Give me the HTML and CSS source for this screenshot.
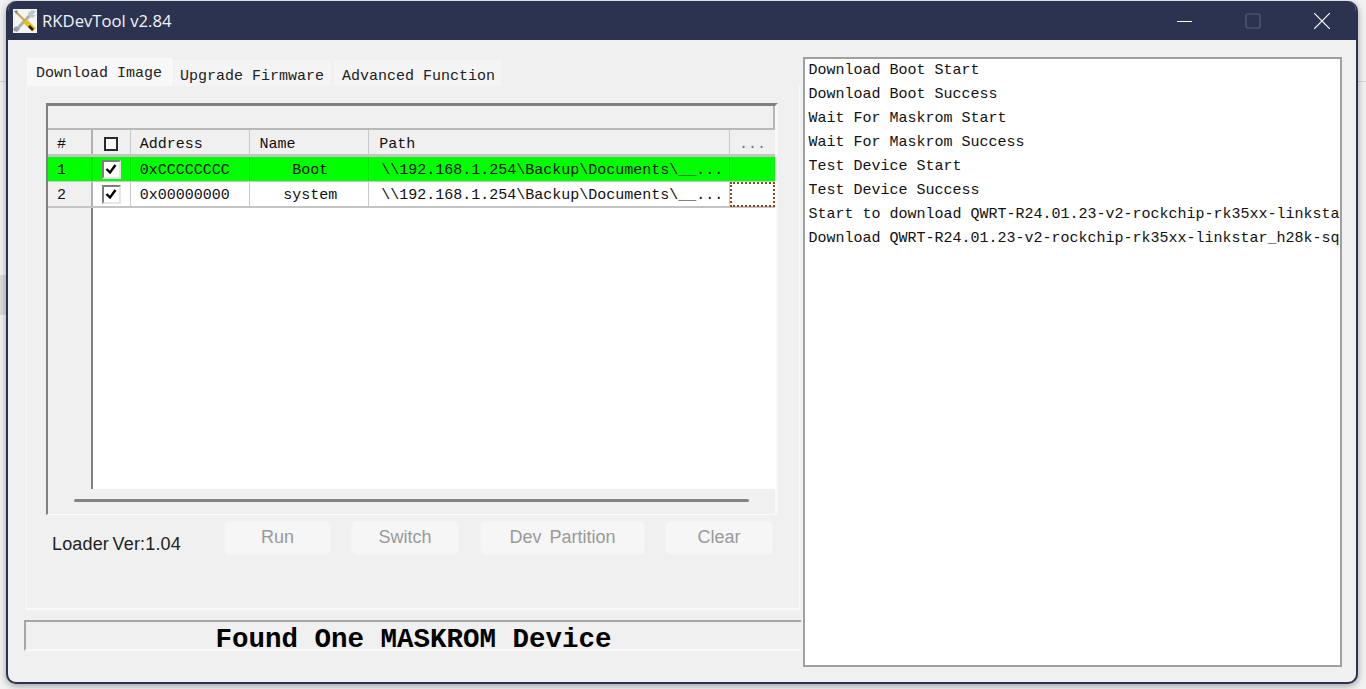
FILE: index.html
```html
<!DOCTYPE html>
<html lang="en">
<head>
<meta charset="utf-8">
<title>RKDevTool v2.84</title>
<link rel="stylesheet" href="styles.css">
</head>
<body>
<div class="desktop">
  <span class="bg-line bg-line-left"></span>
  <span class="bg-line bg-line-right"></span>
  <span class="bg-block"></span>
  <div class="window">
    <header class="titlebar">
      <svg class="app-icon" width="24" height="24" viewBox="0 0 24 24">
        <rect width="24" height="24" fill="#f4f4f4"/>
        <path d="M20 3 5 19" stroke="#a9b0b3" stroke-width="3"/>
        <path d="M19 1l4 1-3 4 3 0-3 3-4-1-1-4z" fill="#c3c8ca"/>
        <path d="M3 17l4 3-3 3-3-1-1-2z" fill="#9aa1a4"/>
        <path d="M3 3 13 13" stroke="#c9a24a" stroke-width="2"/>
        <path d="M1 2l3-1 1 3-2 1z" fill="#8a8f91"/>
        <path d="M12 12 21 21" stroke="#e3c21a" stroke-width="5"/>
        <path d="M16 17 20 21" stroke="#1d1d10" stroke-width="2.5"/>
      </svg>
      <span class="app-title">RKDevTool v2.84</span>
      <div class="win-controls">
        <svg class="win-btn" width="16" height="16" viewBox="0 0 16 16"><path d="M1 8.5h15" stroke="#fff" stroke-width="1.2"/></svg>
        <svg class="win-btn" width="16" height="16" viewBox="0 0 16 16"><rect x="1" y="1" width="14" height="14" rx="2" fill="none" stroke="#565f7d" stroke-width="1.2"/></svg>
        <svg class="win-btn" width="16" height="16" viewBox="0 0 16 16"><path d="M0 0 16 16M16 0 0 16" stroke="#fff" stroke-width="1.2"/></svg>
      </div>
    </header>
    <div class="client">
      <div class="left-col">
        <nav class="tabs">
          <span class="tab tab-active">Download Image</span>
          <span class="tab tab-upgrade">Upgrade Firmware</span>
          <span class="tab tab-advanced">Advanced Function</span>
        </nav>
        <section class="tab-panel">
          <div class="grid-box">
            <div class="grid-top"></div>
            <div class="row row-head">
              <div class="cell c-num">#</div>
              <div class="cell c-check"><span class="box-head"></span></div>
              <div class="cell c-addr">Address</div>
              <div class="cell c-name name-head">Name</div>
              <div class="cell c-path">Path</div>
              <div class="cell c-more">...</div>
            </div>
            <div class="row row-green">
              <div class="cell c-num">1</div>
              <div class="cell c-check"><span class="box"><svg width="14" height="14" viewBox="0 0 14 14"><path d="M2.5 7 6 10.5 11.5 3" fill="none" stroke="#000" stroke-width="2.4"/></svg></span></div>
              <div class="cell c-addr">0xCCCCCCCC</div>
              <div class="cell c-name">Boot</div>
              <div class="cell c-path">\\192.168.1.254\Backup\Documents\__...</div>
              <div class="cell c-more"></div>
            </div>
            <div class="row row-white">
              <div class="cell c-num">2</div>
              <div class="cell c-check"><span class="box"><svg width="14" height="14" viewBox="0 0 14 14"><path d="M2.5 7 6 10.5 11.5 3" fill="none" stroke="#000" stroke-width="2.4"/></svg></span></div>
              <div class="cell c-addr">0x00000000</div>
              <div class="cell c-name">system</div>
              <div class="cell c-path">\\192.168.1.254\Backup\Documents\__...</div>
              <div class="cell c-more c-focus"></div>
            </div>
            <div class="grid-fill"><div class="fill-head"></div><div class="fill-body"></div></div>
            <div class="hscroll"><span class="hscroll-line"></span></div>
          </div>
          <div class="actions">
            <span class="loader">Loader Ver:1.04</span>
            <button class="btn btn-run">Run</button>
            <button class="btn btn-switch">Switch</button>
            <button class="btn btn-dev">Dev Partition</button>
            <button class="btn btn-clear">Clear</button>
          </div>
        </section>
        <div class="status">Found One MASKROM Device</div>
      </div>
      <div class="log">
        <div class="log-line">Download Boot Start</div>
        <div class="log-line">Download Boot Success</div>
        <div class="log-line">Wait For Maskrom Start</div>
        <div class="log-line">Wait For Maskrom Success</div>
        <div class="log-line">Test Device Start</div>
        <div class="log-line">Test Device Success</div>
        <div class="log-line">Start to download QWRT-R24.01.23-v2-rockchip-rk35xx-linksta</div>
        <div class="log-line">Download QWRT-R24.01.23-v2-rockchip-rk35xx-linkstar_h28k-sq</div>
      </div>
    </div>
  </div>
</div>
</body>
</html>
```
FILE: styles.css
```css
* { box-sizing: border-box; }
html, body { margin: 0; padding: 0; height: 100%; overflow: hidden; }
body { background: #f3f3f3; font-family: "Liberation Mono", monospace; color: #111; }

.desktop {
  position: relative;
  width: 1366px;
  height: 689px;
  padding: 1px 8px 5px 6px;
  display: flex;
  background: #f2f2f2;
}
.bg-line { position: absolute; top: 81px; height: 1px; background: #d6d6d6; }
.bg-line-left { left: 0; width: 6px; }
.bg-line-right { right: 0; width: 8px; }
.bg-block { position: absolute; left: 0; top: 275px; width: 6px; height: 40px; background: #dcdcdc; }

.window {
  position: relative;
  flex: 1;
  display: flex;
  flex-direction: column;
  background: #f0f0f0;
  border: 2px solid #2c3350;
  border-top: 0;
  border-radius: 10px;
  box-shadow: 0 2px 7px rgba(0, 0, 0, .35);
  overflow: hidden;
}
.titlebar {
  height: 39px;
  flex: none;
  background: #2c3350;
  display: flex;
  align-items: center;
  padding-left: 5px;
  color: #fff;
}
.app-icon { flex: none; }
.app-title {
  font-family: "Open Sans", "Liberation Sans", sans-serif;
  font-size: 16.7px;
  margin-left: 5px;
  color: #f2f3f6;
}
.win-controls { margin-left: auto; display: flex; gap: 53px; padding-right: 26px; align-items: center; }
.win-btn { display: block; margin-top: 1px; }

.client {
  flex: 1;
  display: flex;
  padding: 17px 14px 17px 16px;
  min-height: 0;
}
.left-col { width: 780px; display: flex; flex-direction: column; padding-top: 1px; }
.tabs { display: flex; height: 28px; margin-left: 3px; flex: none; align-items: flex-end; }
.tab {
  font-size: 15px;
  height: 26px;
  padding: 7px 0 0 6px;
  line-height: 20px;
  background: #f4f4f4;
  white-space: pre;
  color: #222;
}
.tab-active { height: 28px; padding: 6px 11px 0 9px; background: #f8f8f8; margin-right: 1px; }
.tab-upgrade { width: 157px; }
.tab-advanced { width: 167px; margin-left: 3px; padding-left: 8px; }
.tab-panel {
  width: 774px;
  height: 524px;
  margin-left: 2px;
  padding: 17px 20px 0 19px;
  flex: none;
  border-right: 1px solid #fafafa;
  border-bottom: 2px solid #fafafa;
  border-left: 1px solid #f8f8f8;
}

.grid-box {
  height: 412px;
  width: 732px;
  display: flex;
  flex-direction: column;
  border-top: 3px solid #808080;
  border-left: 2px solid #808080;
  border-right: 3px solid #f8f8f8;
  border-bottom: 1px solid #fafafa;
}
.grid-top { height: 24px; flex: none; border-right: 2px solid #b5b5b5; border-bottom: 2px solid #b9b9b9; }
.row { display: flex; flex: none; font-size: 15px; }
.row-head { height: 27px; border-bottom: 3px solid #c4c4c4; }
.row-green { height: 25px; background: #00ff00; border-bottom: 1px solid #c9c9c9; }
.row-white { height: 26px; background: #fff; border-bottom: 2px solid #c4c4c4; }
.cell {
  display: flex;
  align-items: center;
  border-right: 1px solid #c9c9c9;
  white-space: pre;
  padding: 3px 0 0 9px;
  overflow: hidden;
}
.row-head .cell { background: #f0f0f0; padding-top: 5px; }
.c-num { width: 45px; padding-left: 9px; background: #f0f0f0; border-right: 2px solid #b0b0b0; }
.c-check, .row-head .c-check { width: 38px; padding: 0; justify-content: center; }
.row-head .c-check { padding-top: 3px; }
.c-addr { width: 120px; }
.c-name { width: 119px; justify-content: center; padding-left: 2px; }
.row-head .name-head { justify-content: flex-start; padding-left: 9px; }
.c-path { width: 362px; padding-left: 12px; }
.row-head .c-path { padding-left: 10px; }
.c-more { width: 45px; color: #777; padding-left: 9px; border-right: 0; }
.row-green .c-num { background: #00ff00; border-right-color: #00ff00; }
.row-green .cell { border-right-color: #00e800; }
.c-focus { border: 2px dotted #8a4a1c; margin-bottom: -1px; }

.box-head { width: 14px; height: 14px; border: 2px solid #2a2a2a; display: block; background: #f8f8f8; margin-left: -1px; }
.box {
  width: 19px;
  height: 19px;
  border: 2px solid #7e7e7e;
  border-right-color: #e6e6e6;
  border-bottom-color: #e6e6e6;
  background: #fff;
  display: flex;
  align-items: center;
  justify-content: center;
}

.grid-fill { flex: 1; display: flex; min-height: 0; }
.fill-head { width: 45px; background: #f0f0f0; border-right: 2px solid #808080; }
.fill-body { flex: 1; background: #fff; margin-right: -1px; }
.hscroll { height: 25px; flex: none; padding: 10px 26px 0 26px; }
.hscroll-line { display: block; height: 3px; background: #848484; border-radius: 2px; }

.actions { display: flex; margin-top: 6px; align-items: flex-start; font-family: "Liberation Sans", sans-serif; }
.loader { width: 178px; padding: 12px 0 0 6px; font-size: 18px; line-height: 22px; letter-spacing: .15px; word-spacing: -1.5px; color: #222; flex: none; white-space: pre; }
.btn {
  height: 34px;
  border: 1px solid #f3f3f3;
  border-radius: 5px;
  background: #f6f6f6;
  color: #9a9a9a;
  font-family: "Liberation Sans", sans-serif;
  font-size: 18px;
  word-spacing: 3px;
  padding: 0 0 2px;
  flex: none;
}
.btn-run { width: 107px; }
.btn-switch { width: 108px; margin-left: 20px; }
.btn-dev { width: 165px; margin-left: 21px; }
.btn-clear { width: 108px; margin-left: 20px; }

.status {
  width: 777px;
  height: 31px;
  margin-top: 10px;
  border-top: 2px solid #a6a6a6;
  border-left: 2px solid #a6a6a6;
  border-bottom: 2px solid #f9f9f9;
  font-weight: bold;
  font-size: 27.5px;
  line-height: 35px;
  text-align: center;
  color: #000;
  white-space: pre;
}

.log {
  width: 539px;
  margin-left: auto;
  height: 610px;
  background: #fff;
  border: 2px solid #a0a0a0;
  padding: 0 0 0 3px;
  font-size: 15px;
  line-height: 24px;
  overflow: hidden;
  color: #111;
}
.log-line { white-space: pre; height: 24px; }
```
